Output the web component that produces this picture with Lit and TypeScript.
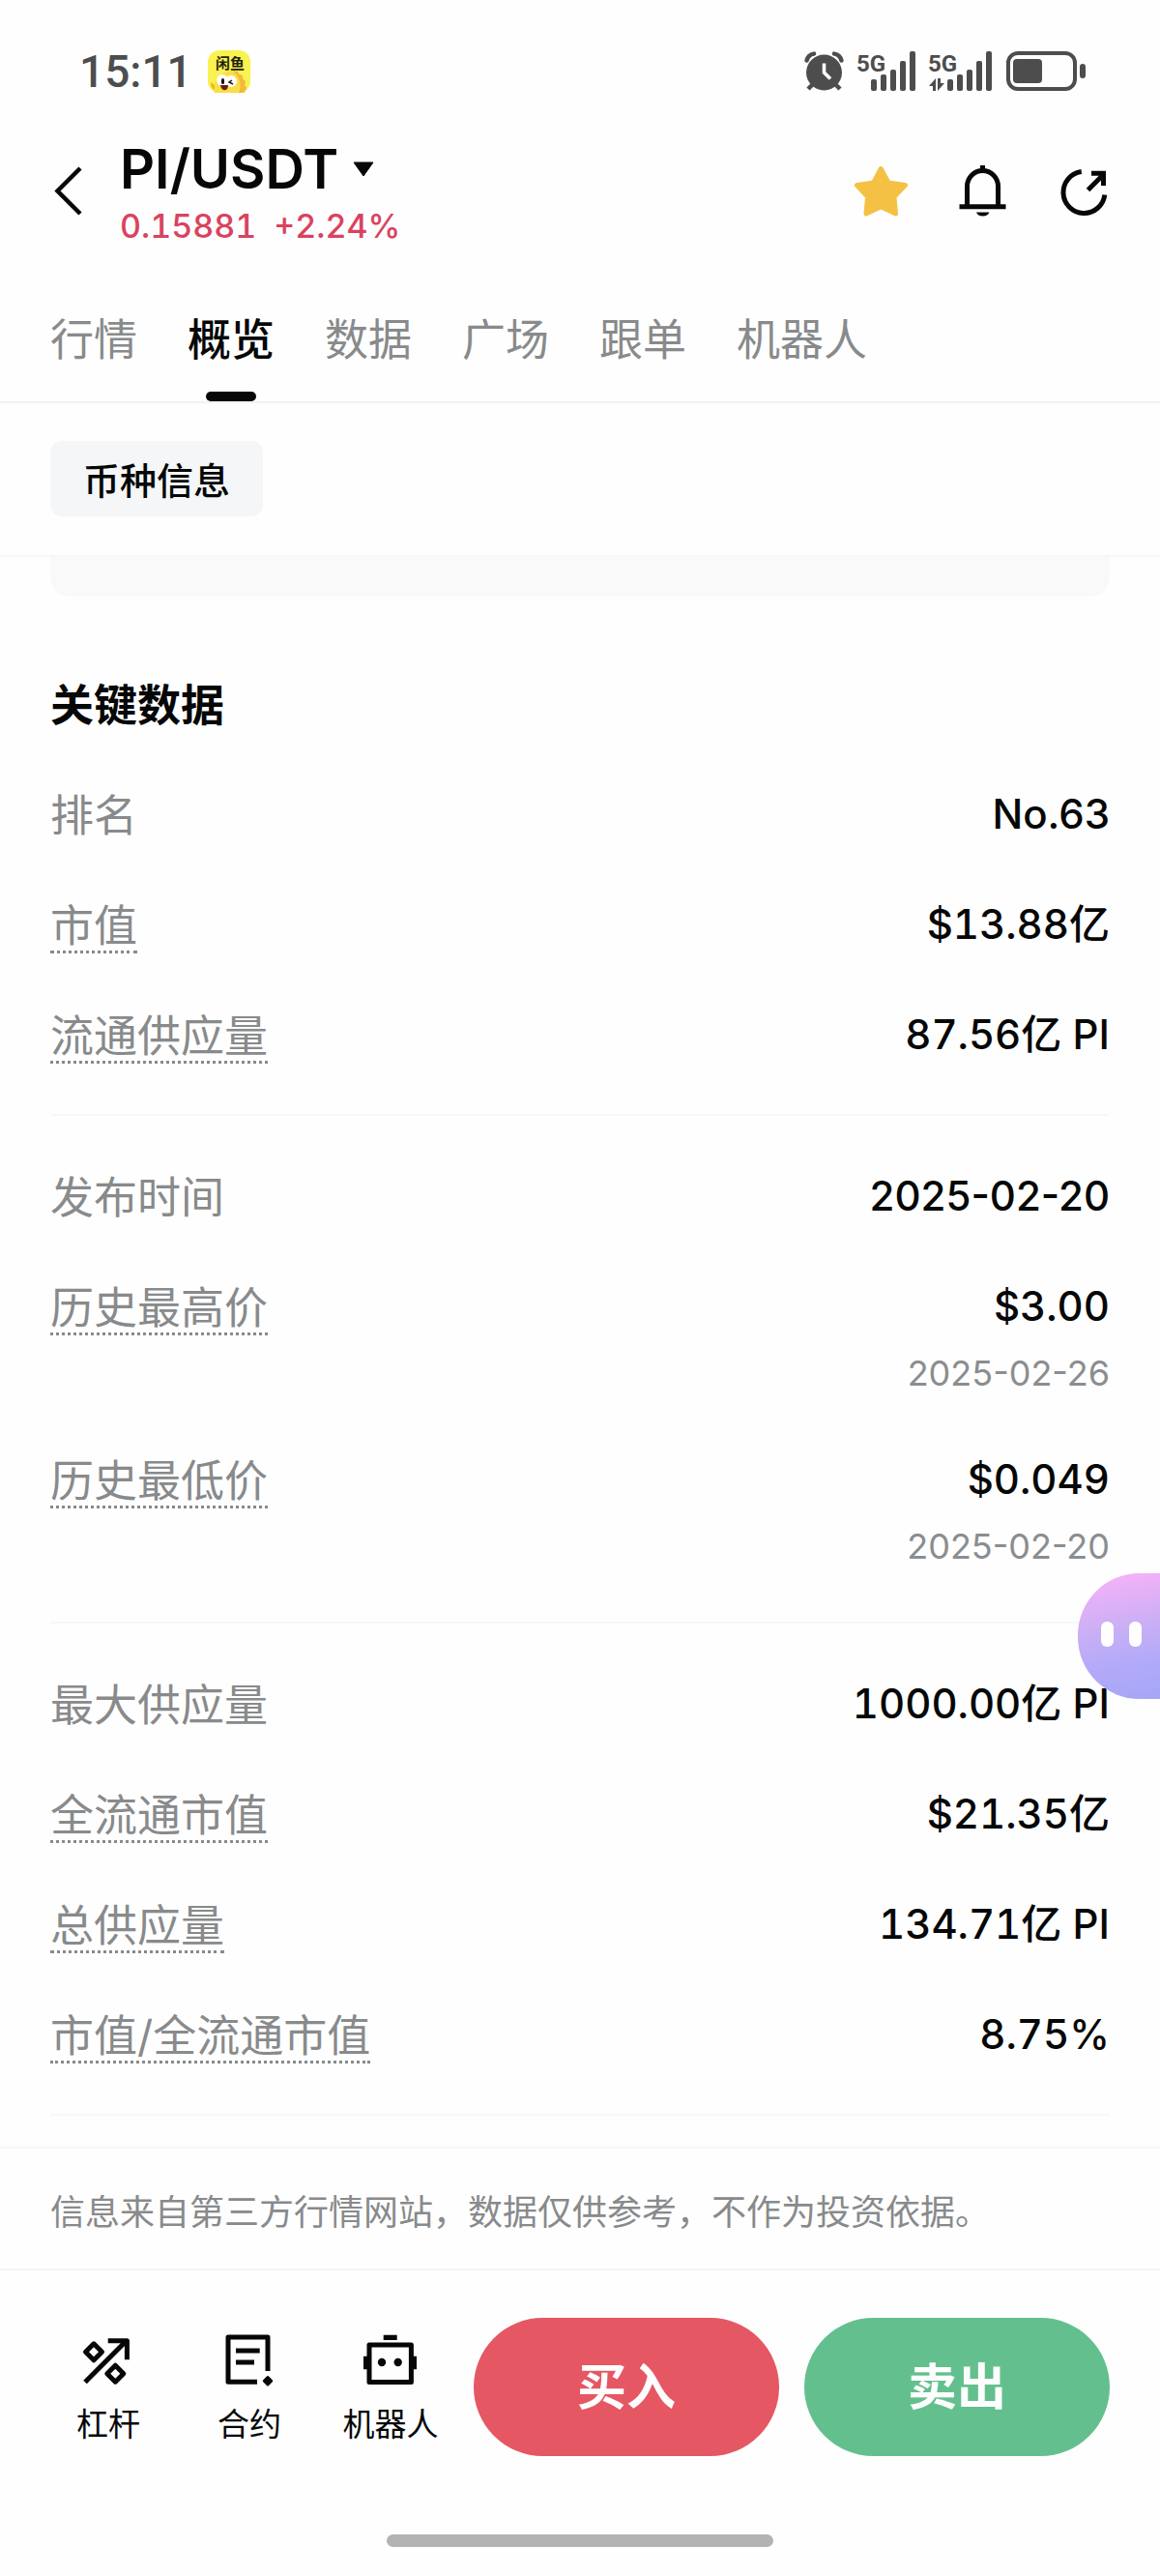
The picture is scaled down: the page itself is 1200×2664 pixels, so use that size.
import { LitElement, html, css, svg, nothing, type TemplateResult } from 'lit';
import { customElement, state } from 'lit/decorators.js';
import { classMap } from 'lit/directives/class-map.js';

interface Stat {
  label: string;
  value: string;
  hint?: boolean;
  note?: string;
}

const GROUPS: Stat[][] = [
  [
    { label: '排名', value: 'No.63' },
    { label: '市值', value: '$13.88亿', hint: true },
    { label: '流通供应量', value: '87.56亿 PI', hint: true },
  ],
  [
    { label: '发布时间', value: '2025-02-20' },
    { label: '历史最高价', value: '$3.00', hint: true, note: '2025-02-26' },
    { label: '历史最低价', value: '$0.049', hint: true, note: '2025-02-20' },
  ],
  [
    { label: '最大供应量', value: '1000.00亿 PI' },
    { label: '全流通市值', value: '$21.35亿', hint: true },
    { label: '总供应量', value: '134.71亿 PI', hint: true },
    { label: '市值/全流通市值', value: '8.75%', hint: true },
  ],
];

const TABS = ['行情', '概览', '数据', '广场', '跟单', '机器人'];

/** Amounts get fixed-width digits; dates and ranks stay proportional. */
const isAmount = (value: string) => /[$亿%]/.test(value);

const bars = (x: number) =>
  [30, 25, 20, 11, 1].map((y, i) => svg`<rect x=${x + i * 10} y=${y} width="6" height=${42 - y} rx="2" />`);

const alarmIcon = html`<svg width="42" height="44" viewBox="0 0 42 44" aria-hidden="true">
  <circle cx="20.5" cy="23" r="18.5" fill="currentColor" />
  <path d="M2.6 10.5A9 9 0 0 1 10 3.6M31 3.6a9 9 0 0 1 7.4 6.9" fill="none" stroke="currentColor" stroke-width="4.5" stroke-linecap="round" />
  <path d="M9 35l-5 5M32 35l5 5" stroke="currentColor" stroke-width="4.5" />
  <path d="M20.5 13.5V23l6.5 6.5" fill="none" stroke="#fefefe" stroke-width="3.6" />
</svg>`;

const signalIcon = html`<svg width="62" height="44" viewBox="0 0 62 44" fill="currentColor" aria-hidden="true">
  <text class="net" x="0" y="22">5G</text>${bars(15)}
</svg>`;

const signalDataIcon = html`<svg width="68" height="44" viewBox="0 0 68 44" fill="currentColor" aria-hidden="true">
  <text class="net" x="0" y="22">5G</text>
  <path d="M5 42V37H1l7-8v13zM10 29h3v5h4l-7 8z" />${bars(20)}
</svg>`;

const batteryIcon = html`<svg width="84" height="44" viewBox="0 0 84 44" aria-hidden="true">
  <rect x="3" y="3" width="69" height="37" rx="10" fill="none" stroke="currentColor" stroke-width="4" />
  <rect x="8" y="9" width="30" height="25" rx="4" fill="currentColor" />
  <rect x="77" y="14" width="6" height="15" rx="3" fill="currentColor" />
</svg>`;

const fishIcon = html`<svg width="44" height="44" viewBox="0 0 44 44" role="img" aria-label="闲鱼">
  <rect width="44" height="44" rx="12" fill="#f9f250" />
  <path d="M7 44c-1-9 1-17 9-20 4-3 10-4 14-1 7 3 11 11 9 20-2 1-4 1-6 1z" fill="#fade48" />
  <path d="M26 21l5 1 1 3 4 1 0 4 3 2-1 4 2 3-3 5h-5c3-7 2-16-6-23z" fill="#f3b93a" />
  <path d="M3 33l4 3v5c-3-1-4-4-4-8z" fill="#f0b62c" />
  <circle cx="15" cy="31" r="6" fill="#fff" />
  <circle cx="24" cy="32" r="6" fill="#fff" />
  <rect x="14" y="29" width="3" height="6" rx="1.5" fill="#1d1208" />
  <path d="M25 31l-3 2 4 2" fill="none" stroke="#1d1208" stroke-width="1.5" />
  <path d="M13 36h8c0 7-7 7-8 0z" fill="#6a2013" />
  <text class="fish" x="8" y="19">闲鱼</text>
</svg>`;

const backIcon = html`<svg width="36" height="56" viewBox="0 0 36 56" aria-hidden="true">
  <path d="M31 4L7.5 27.500 31 51" fill="none" stroke="currentColor" stroke-width="4.5" />
</svg>`;

const caretIcon = html`<svg width="24" height="16" viewBox="0 0 24 16" aria-hidden="true">
  <path d="M2 1h20L12 15z" fill="currentColor" stroke="currentColor" stroke-linejoin="round" />
</svg>`;

const starIcon = html`<svg width="56" height="56" viewBox="0 0 56 56" aria-hidden="true">
  <path d="M27.300 4.500L35 19l17.500 2.500L41 33.500l1.500 17.500-15.200-7.200L12 51l1.600-17.500L2.500 21.500 19.600 19z"
    fill="#f4c145" stroke="#f4c145" stroke-width="5" stroke-linejoin="round" />
</svg>`;

const bellIcon = html`<svg width="56" height="56" viewBox="0 0 56 56" aria-hidden="true">
  <g fill="none" stroke="currentColor" stroke-width="5">
    <path d="M27.500 1v5M3.500 43.700h48" />
    <path d="M11.500 43V22.500a16 16 0 0 1 32 0V43" />
  </g>
  <path d="M21 49.500h13.400a7 5.500 0 0 1-13.400 0z" fill="currentColor" />
</svg>`;

const shareIcon = html`<svg width="56" height="56" viewBox="0 0 56 56" fill="none" stroke="currentColor" stroke-width="5" aria-hidden="true">
  <path d="M24.700 7.600A21.500 21.500 0 1 0 48.800 31.500" />
  <path d="M31.500 26.500L48 10" />
  <path d="M35 9.300h12.500V22" />
</svg>`;

const leverageIcon = html`<svg width="60" height="60" viewBox="0 0 60 60" fill="none" stroke="currentColor" stroke-width="5" stroke-linejoin="round" aria-hidden="true">
  <path d="M15 14.800l8.500 8.500-8.500 8.500-8.500-8.500z" />
  <path d="M37.300 37.200l8.500 8.500-8.500 8.500-8.500-8.500z" />
  <path d="M6 54.500L49 11.500M29.700 11.800h19.700v19.500" />
</svg>`;

const contractIcon = html`<svg width="60" height="60" viewBox="0 0 60 60" fill="none" stroke="currentColor" stroke-width="5" stroke-linejoin="round" aria-hidden="true">
  <path d="M49 43V8H8v46.300h30M16 22h24.700M16 34h19" />
  <path d="M49 49.500l3.700 3.700-3.700 3.700-3.700-3.700z" fill="currentColor" stroke-width="3" />
</svg>`;

const robotIcon = html`<svg width="60" height="60" viewBox="0 0 60 60" aria-hidden="true">
  <rect x="8" y="16" width="43.400" height="38.500" fill="none" stroke="currentColor" stroke-width="5" stroke-linejoin="round" />
  <path d="M2 27.700h6v13.600H2zM51 27.700h6v13.600h-6zM22.700 5.700h14V11h-14z" fill="currentColor" />
  <circle cx="21" cy="34" r="4.200" fill="currentColor" />
  <circle cx="37.700" cy="34" r="4.200" fill="currentColor" />
</svg>`;

const SHORTCUTS: { label: string; icon: TemplateResult }[] = [
  { label: '杠杆', icon: leverageIcon },
  { label: '合约', icon: contractIcon },
  { label: '机器人', icon: robotIcon },
];

@customElement('app-root')
export class AppRoot extends LitElement {
  @state() private tab = '概览';

  static styles = css`
    :host {
      display: block;
      position: relative;
      background: #fefefe;
      color: #060707;
      font-family: Inter, 'Noto Sans CJK SC', sans-serif;
    }
    * {
      box-sizing: border-box;
    }
    svg {
      display: block;
      flex: none;
    }
    button {
      padding: 0;
      border: 0;
      background: none;
      color: inherit;
      font: inherit;
      cursor: pointer;
    }
    a {
      color: inherit;
      text-decoration: none;
    }
    h1,
    h2,
    p,
    dl,
    dd {
      margin: 0;
    }
    .status {
      display: flex;
      align-items: center;
      gap: 16px;
      padding: 50px 76px 46px 82px;
      color: #4d4d4d;
    }
    .clock {
      font-size: 46px;
      line-height: 48px;
      font-family: Roboto, sans-serif;
      font-weight: 500;
    }
    .signals {
      display: flex;
      gap: 12px;
      margin-left: auto;
    }
    .net {
      font: 700 24px Roboto, sans-serif;
    }
    .fish {
      font: 700 15px 'Noto Sans CJK SC', sans-serif;
      fill: #23230f;
    }
    .header {
      display: flex;
      align-items: center;
      padding: 0 50px 0 52px;
    }
    .pair {
      margin-left: 36px;
    }
    .pair-name {
      display: flex;
      align-items: center;
      gap: 14px;
    }
    h1 {
      font-size: 56px;
      line-height: 62px;
      font-weight: 600;
    }
    .quote {
      display: flex;
      gap: 18px;
      margin-top: 10px;
      color: #d9435f;
      font-size: 34px;
      line-height: 36px;
      font-weight: 500;
      font-variant-numeric: tabular-nums;
    }
    .actions {
      display: flex;
      gap: 49px;
      margin-left: auto;
    }
    .tabs {
      display: flex;
      gap: 52px;
      padding: 73px 52px 0;
      border-bottom: 2px solid #f2f2f3;
      color: #888a8b;
      font-size: 45px;
      line-height: 54px;
    }
    .tab {
      display: flex;
      flex-direction: column;
      align-items: center;
      gap: 26px;
    }
    .tab::after {
      content: '';
      width: 52px;
      height: 10px;
      border-radius: 5px;
    }
    .tab.current {
      color: #060707;
      font-weight: 500;
    }
    .tab.current::after {
      background: #060707;
    }
    .filters {
      display: flex;
      padding: 39px 52px 40px;
      border-bottom: 2px solid #f7f7f8;
    }
    .chip {
      padding: 14px 34px 10px;
      border-radius: 12px;
      background: #f4f6f8;
      font-size: 38px;
      line-height: 54px;
      font-weight: 500;
    }
    .content {
      padding: 0 52px 32px;
    }
    .card-end {
      height: 41px;
      border-radius: 0 0 20px 20px;
      background: #f9f9f9;
    }
    h2 {
      margin: 86px 0 2px;
      font-size: 45px;
      line-height: 54px;
      font-weight: 700;
    }
    .group {
      display: flex;
      flex-direction: column;
      gap: 60px;
      padding: 56px 0 55px;
      border-bottom: 2px solid #f6f7f7;
    }
    .row {
      display: flex;
      justify-content: space-between;
      align-items: flex-start;
    }
    dt {
      margin-bottom: -3px;
      padding-top: 4px;
      border-bottom: 3px solid transparent;
      color: #888a8b;
      font-size: 45px;
      line-height: 50px;
    }
    dt.hint {
      border-bottom: 3px dotted #888a8b;
    }
    dd {
      text-align: right;
    }
    .value {
      font-size: 42px;
      line-height: 54px;
      font-weight: 500;
    }
    .value.amount {
      font-variant-numeric: tabular-nums;
    }
    .note {
      margin-top: 19px;
      color: #8b8d8e;
      font-size: 36px;
      line-height: 46px;
    }
    .disclaimer {
      padding: 40px 52px 32px;
      border-top: 2px solid #f6f6f7;
      border-bottom: 2px solid #f3f3f4;
      color: #888a8b;
      font-size: 36px;
      line-height: 52px;
    }
    .trade {
      display: flex;
      align-items: center;
      padding: 49px 52px 0 39px;
    }
    .shortcut {
      display: flex;
      flex: 0 0 146px;
      flex-direction: column;
      align-items: center;
      gap: 16px;
      font-size: 33px;
      line-height: 44px;
    }
    .orders {
      display: flex;
      flex: 1;
      gap: 26px;
      margin-left: 13px;
    }
    .order {
      flex: 1;
      padding: 41px 0;
      border-radius: 72px;
      background: #e55763;
      color: #fefefe;
      font-size: 51px;
      line-height: 61px;
      font-weight: 700;
    }
    .order.sell {
      background: #63c08e;
    }
    .home {
      width: 400px;
      height: 13px;
      margin: 81px auto 0;
      border-radius: 7px;
      background: #b3b3b3;
    }
    .end {
      padding-bottom: 30px;
    }
    .assistant {
      position: absolute;
      top: 1627px;
      right: 0;
      display: flex;
      align-items: center;
      gap: 16px;
      width: 85px;
      height: 130px;
      padding-left: 24px;
      border-radius: 64px 0 0 64px;
      background: linear-gradient(170deg, #fbb2f8 0%, #c9aff5 45%, #b3aaf9 70%, #a5a6f6 100%);
    }
    .eye {
      width: 13px;
      height: 26px;
      margin-bottom: 4px;
      border-radius: 6px;
      background: #fefefe;
    }
  `;

  private renderStat(s: Stat) {
    return html`<div class="row">
      <dt class=${classMap({ hint: !!s.hint })}>${s.label}</dt>
      <dd>
        <div class=${classMap({ value: true, amount: isAmount(s.value) })}>${s.value}</div>
        ${s.note ? html`<div class="note">${s.note}</div>` : nothing}
      </dd>
    </div>`;
  }

  render() {
    return html`
      <div class="status">
        <span class="clock">15:11</span>
        ${fishIcon}
        <div class="signals">${alarmIcon}${signalIcon}${signalDataIcon}${batteryIcon}</div>
      </div>
      <header class="header">
        <button aria-label="返回">${backIcon}</button>
        <div class="pair">
          <button class="pair-name"><h1>PI/USDT</h1>${caretIcon}</button>
          <div class="quote"><span>0.15881</span><span>+2.24%</span></div>
        </div>
        <div class="actions">
          <button aria-label="收藏">${starIcon}</button>
          <button aria-label="提醒">${bellIcon}</button>
          <button aria-label="分享">${shareIcon}</button>
        </div>
      </header>
      <nav class="tabs">
        ${TABS.map(
          (t) => html`<button
            class=${classMap({ tab: true, current: t === this.tab })}
            @click=${() => (this.tab = t)}
          >${t}</button>`
        )}
      </nav>
      <div class="filters"><button class="chip">币种信息</button></div>
      <main class="content">
        <div class="card-end"></div>
        <h2>关键数据</h2>
        ${GROUPS.map((g) => html`<dl class="group">${g.map((s) => this.renderStat(s))}</dl>`)}
      </main>
      <p class="disclaimer">信息来自第三方行情网站，数据仅供参考，不作为投资依据。</p>
      <footer class="end">
        <div class="trade">
          ${SHORTCUTS.map((s) => html`<a class="shortcut" href="#">${s.icon}<span>${s.label}</span></a>`)}
          <div class="orders">
            <button class="order">买入</button>
            <button class="order sell">卖出</button>
          </div>
        </div>
        <div class="home"></div>
      </footer>
      <button class="assistant" aria-label="助手"><span class="eye"></span><span class="eye"></span></button>
    `;
  }
}
